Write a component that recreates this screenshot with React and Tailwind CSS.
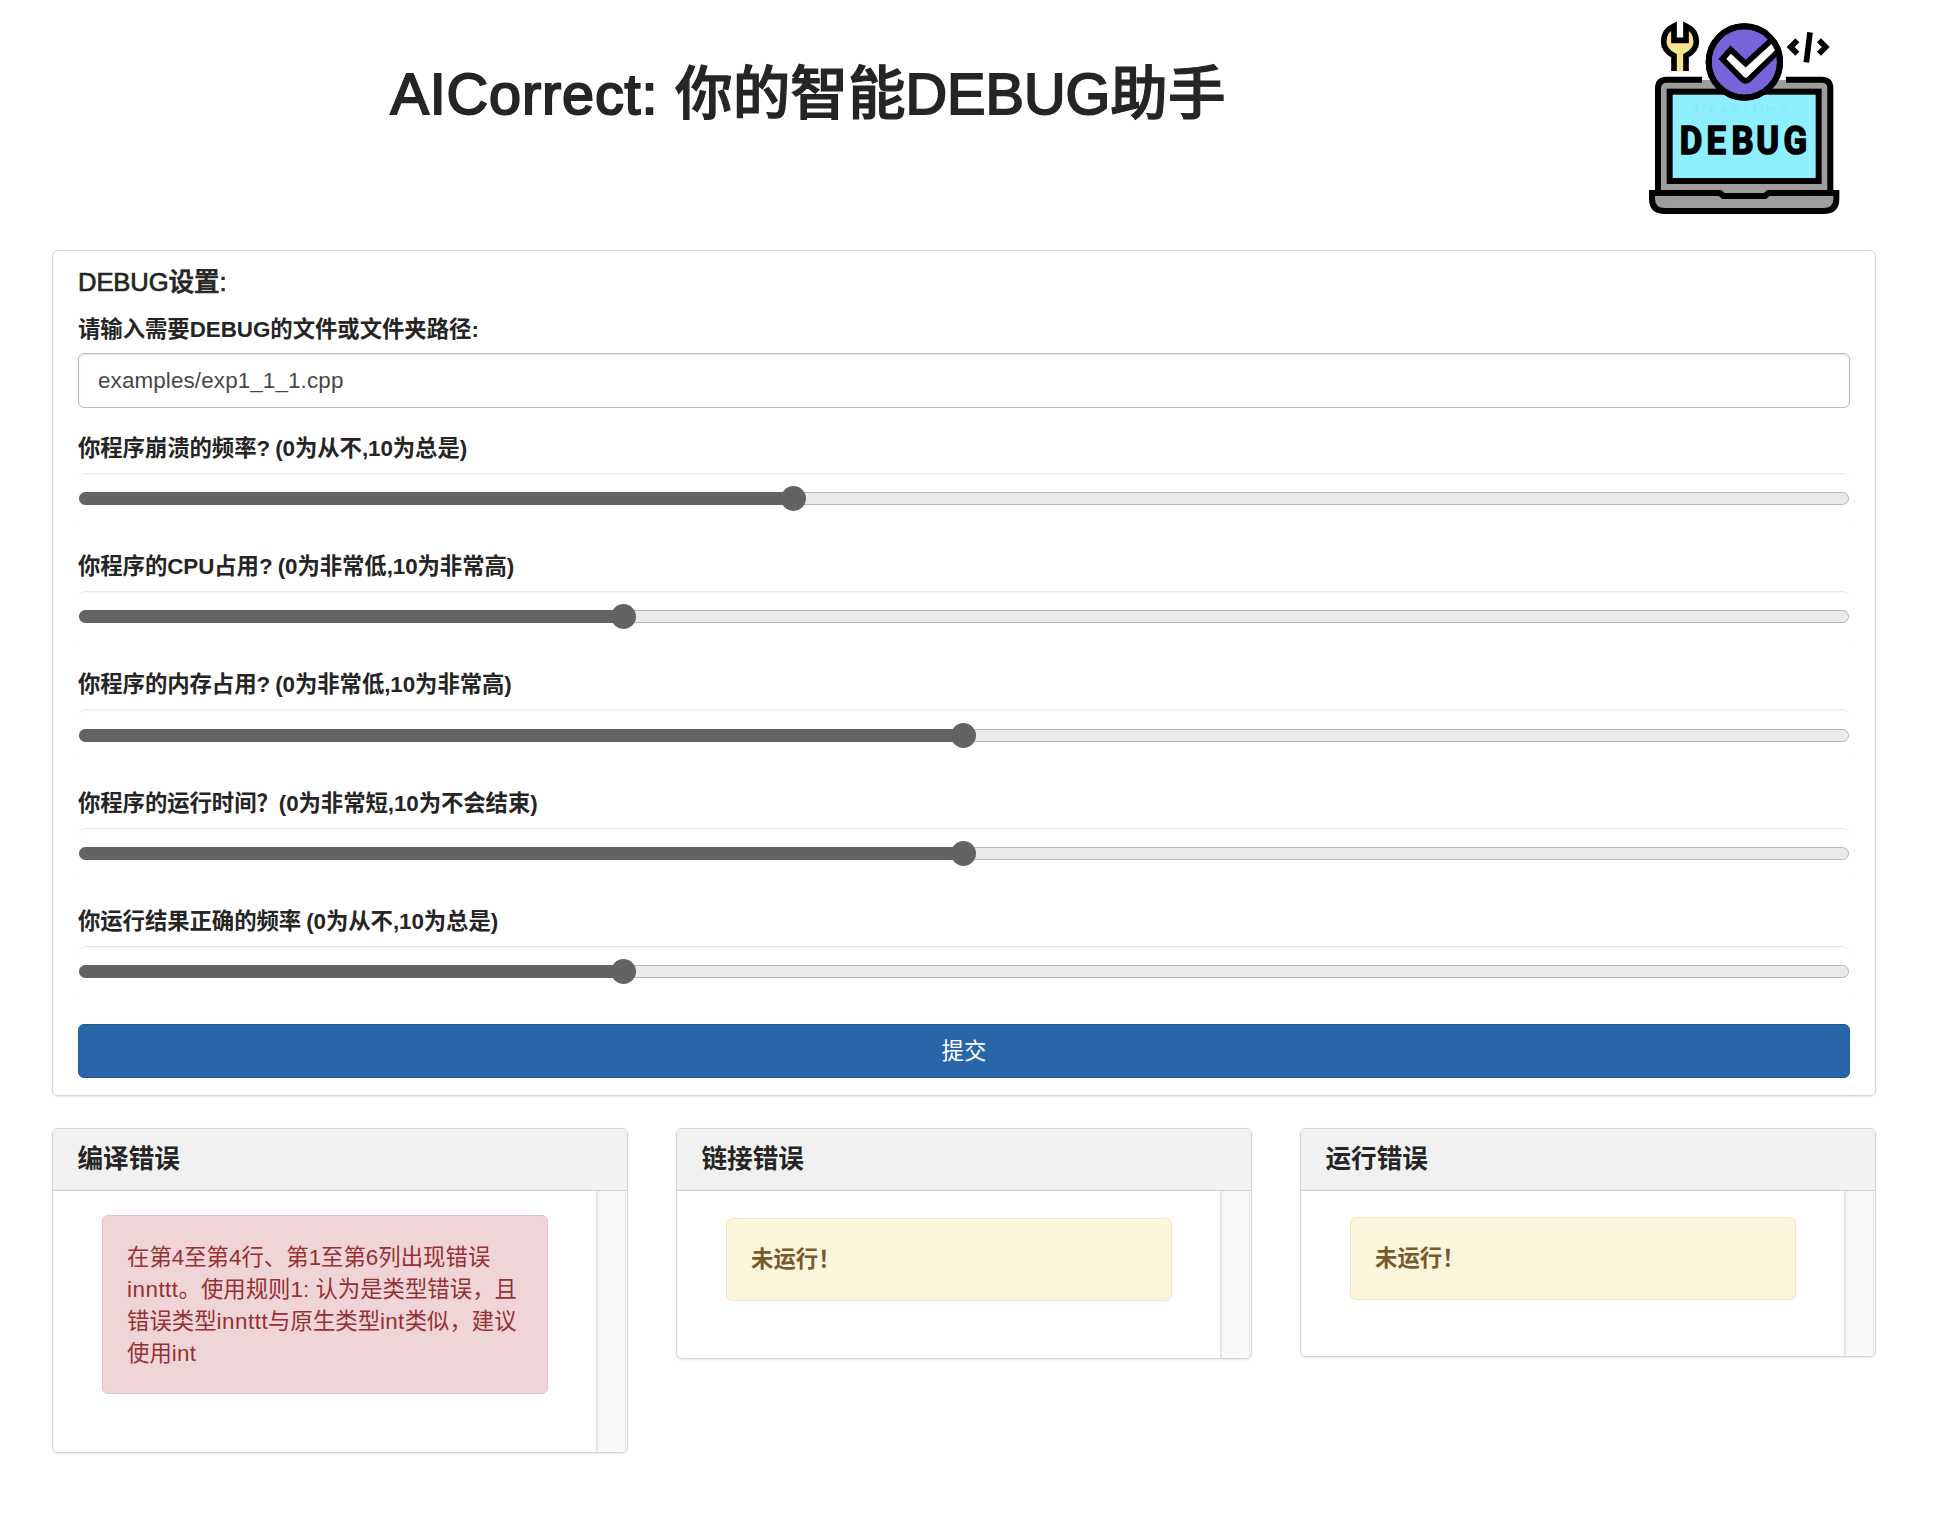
const sliders = [
  { label: "你程序崩溃的频率? (0为从不,10为总是)", value: 40.4 },
  { label: "你程序的CPU占用? (0为非常低,10为非常高)", value: 30.75 },
  { label: "你程序的内存占用? (0为非常低,10为非常高)", value: 50 },
  { label: "你程序的运行时间？(0为非常短,10为不会结束)", value: 50 },
  { label: "你运行结果正确的频率 (0为从不,10为总是)", value: 30.75 },
];

function Logo() {
  return (
    <svg viewBox="0 0 690 660" className="h-[220px] w-[230px]" fill="none" stroke="#000" strokeWidth="18">
      <path d="M84 550V232Q84 209 110 209H575Q601 209 601 232V550Z" fill="#9d9d9d" stroke="none" />
      <path d="M216 209H110Q84 209 84 235V545M468 209H575Q601 209 601 235V545" />
      <path d="M217 199H468V209H217Z" fill="#fff" stroke="none" />
      <path d="M66 549H270L280 558H405L415 549H619V567Q619 603 580 603H105Q66 603 66 567Z" fill="#9d9d9d" />
      <rect x="119" y="245" width="447" height="268" fill="#8eefff" />
      <text x="185" y="310" textLength="285" fontFamily="Liberation Sans" fontSize="36" fill="#87e8f8" stroke="none">dreamstime</text>
      <g transform="scale(0.88 1)" fill="#000" stroke="#000" strokeWidth="5" fontFamily="Roboto" fontWeight="700" fontSize="118">
        <text x="170 261 346 430 523" y="431">DEBUG</text>
      </g>
      <circle cx="343" cy="156" r="107" fill="#7863da" />
      <path d="M277 147L302 119L347 161L426 89L446 120L358 207Q347 218 336 207Z" fill="#fff" stroke="none" />
      <path d="M426 89L347 161L302 119L277 147L336 207Q347 218 358 207L446 122" strokeWidth="17" />
      <circle cx="343" cy="156" r="107" />
      <path d="M132 183V137Q101 121 101 95Q101 60 132 48V91H168V48Q199 60 199 95Q199 121 168 137V183Z" fill="#f7e58e" stroke="none" />
      <path d="M132 183V137Q101 121 101 95Q101 62 132 48V91H168V48Q199 62 199 95Q199 121 168 137V183" strokeWidth="17" />
      <path d="M502 91L482 111L502 131M567 91L587 111L567 131M540 67L529 157" strokeWidth="17" />
    </svg>
  );
}

function Slider({ label, value }) {
  return (
    <div className="h-[118.2px]">
      <div className="flex h-[40px] items-center pt-[2px] font-bold tracking-[-0.08px] whitespace-pre [word-spacing:-1px]">
        {label}
      </div>
      <div className="mx-[1px] mt-[5px] h-[54px] rounded-[6px] border-t border-[#e8e8e8] pt-[18.3px] shadow-[inset_0_1px_1px_rgba(0,0,0,0.03)]">
        <div className="relative flex h-[13px] items-center rounded-full border border-[#b4b4b4] bg-[#eaeaea]">
          <div className="-ml-px h-[13px] shrink-0 rounded-full bg-[#636363]" style={{ width: `${value}%` }} />
          <div className="-ml-[12px] size-[25px] shrink-0 rounded-full bg-[#636363]" />
        </div>
      </div>
    </div>
  );
}

function Card({ title, className, children }) {
  return (
    <section className={`flex w-[576px] flex-col overflow-hidden rounded-[6px] border border-[#d4d4d4] shadow-[0_1px_2px_rgba(0,0,0,0.1)] ${className}`}>
      <h2 className="flex h-[62px] shrink-0 items-center border-b border-[#d0d0d0] bg-[#f1f1f1] pb-[1px] pl-[24.5px] text-[25.6px] font-bold">
        {title}
      </h2>
      <div className="flex min-h-0 grow">
        <div className="w-[543px] pl-[49px]">{children}</div>
        <div className="w-[30px] border-r border-l-2 border-[#e4e4e4] bg-[#f9f9f9]" />
      </div>
    </section>
  );
}

function Warning({ className }) {
  return (
    <div className={`flex h-[83px] w-[446px] items-center rounded-[6px] border border-[#f3e6c6] bg-[#faf5db] pt-[1px] pl-[24px] font-bold text-[#785a2c] ${className}`}>
      未运行！
    </div>
  );
}

export default function App() {
  return (
    <div className="h-[1514px] w-[1942px] overflow-hidden bg-white pl-[52px] font-['Liberation_Sans','Noto_Sans_CJK_SC',sans-serif] text-[22.4px] leading-[32px] text-[#252525]">
      <header className="flex h-[250px] items-start">
        <h1 className="mt-[51px] w-[1512px] text-center text-[57.6px] leading-[86px] font-medium whitespace-nowrap [-webkit-text-stroke:1.2px_#252525]">
          <span className="tracking-[0.85px] [-webkit-text-stroke:2px_#252525]">AICorrect: </span>
          你的智能
          <span className="[-webkit-text-stroke:2px_#252525]">DEBUG</span>
          助手
        </h1>
        <div className="mt-[10px] ml-[66px]">
          <Logo />
        </div>
      </header>

      <main className="h-[846px] w-[1824px] rounded-[6px] border border-[#d4d4d4] px-[25px] shadow-[0_1px_2px_rgba(0,0,0,0.1)]">
        <h2 className="mt-[10px] flex h-[42px] items-center text-[25.6px] font-medium tracking-[-0.1px] [-webkit-text-stroke:0.7px_#252525]">
          DEBUG设置:
        </h2>
        <div className="mt-[4px] flex h-[44px] items-center pt-[2px] font-bold tracking-[-0.05px]">
          请输入需要DEBUG的文件或文件夹路径:
        </div>
        <div className="mt-[2px] flex h-[54.5px] items-center rounded-[6px] border border-[#bcbcbc] pt-[2px] pl-[19px] tracking-[0.13px] text-[#484848] shadow-[inset_0_1px_2px_rgba(0,0,0,0.12)]">
          examples/exp1_1_1.cpp
        </div>
        <div className="mt-[20.5px]">
          {sliders.map((s) => (
            <Slider key={s.label} {...s} />
          ))}
        </div>
        <button className="mt-[5px] flex h-[54px] w-full items-center justify-center rounded-[6px] border border-[#25598f] bg-[#2865a9] pt-[2px] text-white">
          提交
        </button>
      </main>

      <div className="mt-[32px] flex items-start gap-[48px]">
        <Card title="编译错误" className="h-[325px]">
          <div className="mt-[24px] h-[179px] w-[446px] rounded-[6px] border border-[#e3c0c6] bg-[#efd5d7] pt-[26px] pl-[24px] whitespace-nowrap text-[#973033]">
            <p>在第4至第4行、第1至第6列出现错误</p>
            <p><span className="tracking-[0.5px]">innttt</span>。使用规则1: 认为是类型错误，且</p>
            <p>错误类型<span className="tracking-[0.5px]">innttt</span>与原生类型<span className="tracking-[0.3px]">int</span>类似，建议</p>
            <p>使用<span className="tracking-[0.3px]">int</span></p>
          </div>
        </Card>
        <Card title="链接错误" className="h-[231px]">
          <Warning className="mt-[27px]" />
        </Card>
        <Card title="运行错误" className="h-[229px]">
          <Warning className="mt-[26px]" />
        </Card>
      </div>
    </div>
  );
}
